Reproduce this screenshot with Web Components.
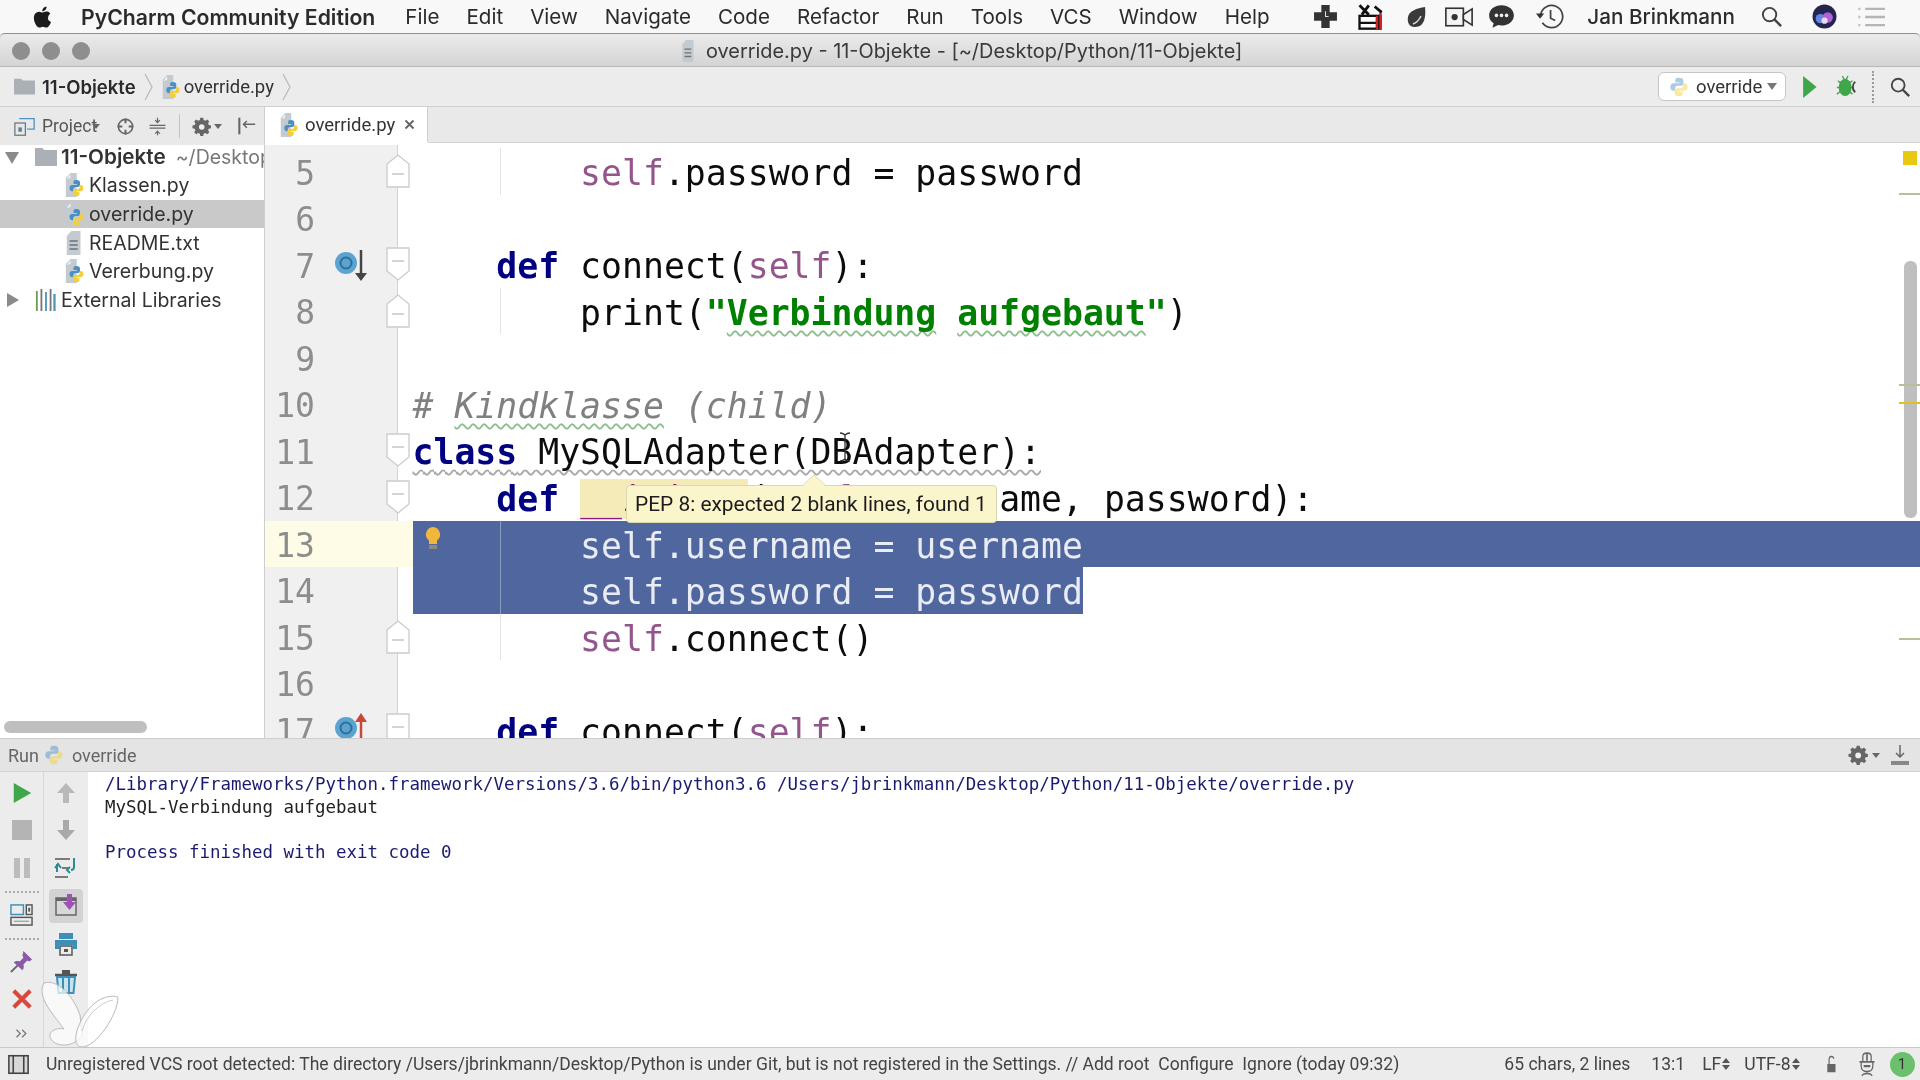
<!DOCTYPE html>
<html lang="en">
<head>
<meta charset="utf-8">
<title>PyCharm</title>
<style>
    html, body { margin: 0; width: 1920px; height: 1080px; overflow: hidden; background: #ececec; }
    body { font-family: Inter, "Liberation Sans", sans-serif; filter: blur(0.45px); }
    .k { color: #000080; font-weight: bold; }
    .s { color: #94558d; }
    .q { color: #008000; font-weight: bold; }
    .c { color: #808080; font-style: italic; }
    .m { color: #8a1a8a; background: #f5ebb9; }
    .wg { text-decoration: underline wavy #8fbf8f 1.5px; text-underline-offset: 5px; text-decoration-skip-ink: none; }
    .wk { text-decoration: underline wavy #a8a8a8 1.5px; text-underline-offset: 5px; text-decoration-skip-ink: none; }
    .sys { color: #1a1a70; }
    .out { color: #222; }
</style>
</head>
<body>
<ide-app>
    <mac-menubar slot="menu"></mac-menubar>
    <title-bar slot="title"></title-bar>
    <nav-bar slot="nav"></nav-bar>
    <tool-row slot="tools"></tool-row>
    <work-area slot="work">
        <project-tree slot="side">
            <tree-item kind="root" arrow="down" label="11-Objekte" note="~/Desktop/Python/11-Objekte"></tree-item>
            <tree-item kind="py" label="Klassen.py"></tree-item>
            <tree-item kind="py" label="override.py" selected></tree-item>
            <tree-item kind="txt" label="README.txt"></tree-item>
            <tree-item kind="py" label="Vererbung.py"></tree-item>
            <tree-item kind="lib" arrow="right" label="External Libraries"></tree-item>
        </project-tree>
        <code-editor slot="main">
<code-line n="5" fold="up" guide>        <span class="s">self</span>.password = password</code-line>
<code-line n="6"></code-line>
<code-line n="7" fold="down" mark="down">    <span class="k">def</span> connect(<span class="s">self</span>):</code-line>
<code-line n="8" fold="up" guide>        print(<span class="q">"<span class="wg">Verbindung</span> <span class="wg">aufgebaut</span>"</span>)</code-line>
<code-line n="9"></code-line>
<code-line n="10"><span class="c"># <span class="wg">Kindklasse</span> (child)</span></code-line>
<code-line n="11" fold="down"><span class="wk"><span class="k">class</span> MySQLAdapter(DBAdapter):</span></code-line>
<code-line n="12" fold="down">    <span class="k">def</span> <span class="m">__init__</span>(<span class="s">self</span>, username, password):</code-line>
<code-line n="13" sel="full" guide bulb>        self.username = username</code-line>
<code-line n="14" sel="part" guide>        self.password = password</code-line>
<code-line n="15" fold="up" guide>        <span class="s">self</span>.connect()</code-line>
<code-line n="16"></code-line>
<code-line n="17" fold="box" mark="up">    <span class="k">def</span> connect(<span class="s">self</span>):</code-line>
            <pep-tooltip slot="over">PEP 8: expected 2 blank lines, found 1</pep-tooltip>
            <error-stripe slot="over"></error-stripe>
        </code-editor>
    </work-area>
    <run-header slot="runhead"></run-header>
    <run-body slot="runbody">
        <div class="sys">/Library/Frameworks/Python.framework/Versions/3.6/bin/python3.6 /Users/jbrinkmann/Desktop/Python/11-Objekte/override.py</div>
        <div class="out">MySQL-Verbindung aufgebaut</div>
        <div>&nbsp;</div>
        <div class="sys">Process finished with exit code 0</div>
    </run-body>
    <status-bar slot="status"></status-bar>
</ide-app>

<script>
const PY = `<path fill="#4b8fc4" d="M12 2C8 2 8 3.800 8 5v2h4.500v1H6C4 8 2.500 9.500 2.500 12S4 16 6 16h1.600v-2.400c0-1.700 1.400-3 3.100-3h3.600c1.300 0 2.500-1.100 2.500-2.500V5c0-1.500-1.300-3-4.800-3z"/><path fill="#f5cf3a" d="M12 22c4 0 4-1.800 4-3v-2h-4.500v-1H18c2 0 3.500-1.500 3.500-4S20 8 18 8h-1.600v2.400c0 1.700-1.400 3-3.100 3H9.700c-1.300 0-2.500 1.100-2.500 2.500V19c0 1.500 1.300 3 4.800 3z"/>`;
const PAGE = `<path fill="#c4cbd0" d="M2 5l5-5h7v24H2z"/><path fill="#eef1f3" d="M3 6l4-1V1z"/>`;

const ICONS = {
    apple: `<path fill="#1c1c1c" d="M17.600 12.700c0-2.500 2-3.700 2.100-3.800-1.100-1.700-2.900-1.900-3.500-1.900-1.500-.2-2.900.9-3.700.9-.8 0-1.900-.9-3.200-.8-1.600 0-3.100 1-4 2.400-1.700 3-.4 7.400 1.200 9.800.8 1.200 1.800 2.500 3.100 2.400 1.200 0 1.700-.8 3.200-.8s1.900.8 3.200.8 2.200-1.200 3-2.400c.9-1.400 1.300-2.700 1.300-2.800-.1 0-2.900-1-2.900-3.800zM15.200 5.300c.7-.8 1.100-2 1-3.100-1 0-2.200.7-2.900 1.500-.6.700-1.200 1.900-1 3 1.100.1 2.200-.6 2.900-1.400z"/>`,
    plus: `<path fill="#333" d="M8 1h8v7h7v8h-7v7H8v-7H1V8h7z"/><path stroke="#ddd" fill="none" d="M12 7v5h3"/>`,
    tools: `<path fill="#111" d="M2 10h20v13H2z"/><path fill="#fff" d="M4 12h13v4H4zM4 18h13v3H4z"/><path fill="#d02020" d="M17 11h2v12h-2zM20 8h2v15h-2z"/><path stroke="#111" stroke-width="2.400" fill="none" d="M3 2l8 8M11 2l-6 8M16 3l6 5"/>`,
    leaf: `<path fill="#3a3a3a" d="M21 2c1 9 0 20-10 20C5 22 3 17 4 12 5 6 13 3 21 2z"/><path stroke="#ddd" stroke-width="1.500" fill="none" d="M9 19c3-1 6-4 8-8"/>`,
    cam: `<rect x="1.500" y="5" width="14" height="14" fill="#f4f4f4" stroke="#333" stroke-width="1.300"/><circle cx="8.500" cy="12" r="2.500" fill="#333"/><path fill="#f4f4f4" stroke="#333" stroke-width="1.300" d="M15.500 10l7-4.500v13l-7-4.500z"/>`,
    chat: `<path fill="#333" d="M12 2c6 0 11 3.800 11 9s-5 9-11 9c-1 0-2-.1-3-.4L4 22l1-4c-2.500-1.600-4-4-4-7 0-5.200 5-9 11-9z"/><circle cx="7.500" cy="11" r="1.600" fill="#eee"/><circle cx="12" cy="11" r="1.600" fill="#eee"/><circle cx="16.500" cy="11" r="1.600" fill="#eee"/>`,
    clock: `<path fill="none" stroke="#444" stroke-width="1.500" d="M4 10a9.500 9.500 0 1 1 1.500 7M12.500 6v7l4 2"/><path fill="#333" d="M0 9h7l-3.500 4.500z"/>`,
    search: `<circle cx="10" cy="10" r="7" fill="none" stroke="#444" stroke-width="2"/><path stroke="#444" stroke-width="2.600" d="M15 15l7 7"/>`,
    siri: `<circle cx="12" cy="12" r="11.500" fill="#23254f"/><circle cx="8" cy="14" r="4.500" fill="#5f86e8"/><circle cx="15" cy="13" r="5" fill="#b060d8"/><circle cx="12" cy="16" r="3" fill="#e8d8f0"/>`,
    list: `<path stroke="#b5b5b5" stroke-width="2" d="M7 5h17M7 12h17M7 19h17"/><path stroke="#c5c5c5" stroke-width="2" d="M1 5h2M1 12h2M1 19h2"/>`,
    folder: `<path fill="#aab0b6" d="M0 3h8l2 2h14v16H0z"/>`,
    py: `${PAGE}<g transform="translate(4 5.500) scale(.8)">${PY}</g>`,
    python: PY,
    pyfade: `<g opacity=".45">${PY}</g>`,
    txt: `<path fill="#c4cbd0" d="M3 5l5-5h10v24H3z"/><path stroke="#6b7278" stroke-width="1.500" d="M6 10h9M6 14h9M6 18h9"/>`,
    lib: `<path fill="#6d9c4c" d="M1 3h2v20H1z"/><path fill="#777" d="M6 1h2v22H6z"/><path fill="#4d95b8" d="M11 4h2v19h-2z"/><path fill="#777" d="M16 1h2v22h-2z"/><path fill="#4d95b8" d="M20 6h2.500v17H20z"/>`,
    project: `<rect x="1" y="8" width="12" height="14" fill="#e8e8e8" stroke="#6b7d8c" stroke-width="1.500"/><path fill="none" stroke="#4a93c2" stroke-width="1.500" d="M6 3h17v12h-8"/><path fill="#6b7d8c" d="M5 13h4v5H5z"/>`,
    target: `<circle cx="12" cy="12" r="9" fill="none" stroke="#666" stroke-width="2"/><path stroke="#666" stroke-width="2.500" d="M12 2v6M12 16v6M2 12h6M16 12h6"/>`,
    collapse: `<path stroke="#666" stroke-width="1.500" fill="none" d="M2 10.500h20M2 14h20M12 1v6M12 17v6M9 4l3 3 3-3M9 21l3-3 3 3"/>`,
    gear: `<path fill="#666" d="M10 1h4l.6 3 2.400 1 2.600-1.700 2.800 2.800L20.700 8.700l1 2.300 3 .6v3.800l-3 .6-1 2.300 1.700 2.600-2.800 2.800-2.600-1.700-2.400 1-.6 3h-4l-.6-3-2.400-1-2.600 1.700-2.800-2.800 1.700-2.600-1-2.300-3-.6v-3.800l3-.6 1-2.300L1.600 6.100l2.800-2.800L7 5l2.400-1z" transform="scale(.92)"/><circle cx="11" cy="12.500" r="3.500" fill="#eee"/>`,
    hide: `<path stroke="#666" stroke-width="2.500" d="M4 2v20"/><path stroke="#666" stroke-width="1.800" fill="none" d="M9 10h14M13 6l-4 4 4 4"/>`,
    play: `<path fill="#3fa64a" d="M3 1l19 11L3 23z"/>`,
    bug: `<ellipse cx="10" cy="13" rx="7" ry="9" fill="#3fa64a"/><path stroke="#3fa64a" stroke-width="1.500" d="M2 6l4 3M18 6l-4 3M1 13h4M1 20l4-3M15 13h4M18 20l-4-3M7 1l2 4M13 1l-2 4"/><path fill="none" stroke="#3f4a40" stroke-width="2" d="M21 7c-3 2-4 8 0 11"/>`,
    stop: `<rect x="2" y="2" width="20" height="20" fill="#b4b4b4"/>`,
    pause: `<path fill="#bcbcbc" d="M4 2h6v20H4zM14 2h6v20h-6z"/>`,
    up: `<path fill="#b9b9b9" d="M12 2l9 10h-6v10H9V12H3z"/>`,
    down: `<path fill="#a9a9a9" d="M12 22l9-10h-6V2H9v10H3z"/>`,
    wrap: `<path stroke="#555" stroke-width="1.500" d="M1 3h15M1 21h13M8 12h6"/><path stroke="#2d8c92" stroke-width="2" fill="none" d="M3 8v8M1 12l3-4 3 4M20 2v9c0 2-1 3-3 3M16 11l-3 3 3 3"/>`,
    scroll: `<rect x="2" y="4" width="20" height="17" fill="#d8d8d8" stroke="#666" stroke-width="1.500"/><path fill="#666" d="M2 4h20v3H2z"/><path fill="#a050b8" d="M13 0h5v8h4l-6.500 8L9 8h4z"/>`,
    print: `<path fill="#3d8fb8" d="M5 1h14v6H5zM1 8h22v9h-4v-4H5v4H1z"/><path fill="none" stroke="#555" stroke-width="1.500" d="M6 14h12v9H6z"/><path fill="#555" d="M10 17h4v3h-4z"/>`,
    trash: `<path stroke="#555" stroke-width="2.500" d="M1 5h22"/><path fill="#555" d="M8 0h8v4H8z"/><path fill="#c8e4ee" stroke="#3d8fb8" stroke-width="2" d="M3 7h18l-1.500 16H4.500z"/><path stroke="#3d8fb8" stroke-width="2" d="M9 8v14M15 8v14"/>`,
    layout: `<rect x="1" y="2" width="13" height="10" fill="none" stroke="#3d8fb8" stroke-width="1.500"/><rect x="17" y="2" width="6" height="10" fill="none" stroke="#555" stroke-width="1.500"/><path fill="#555" d="M19 5h2v4h-2z"/><rect x="1" y="15" width="22" height="8" fill="none" stroke="#555" stroke-width="1.500"/><path stroke="#888" d="M4 19h16"/>`,
    pin: `<path fill="#8a5aa8" d="M14 1l9 9-3 2-2-1-4 4c1 3 0 5-1 6L4 13c1-1 3-2 6-1l4-4-1-2z"/><path stroke="#666" stroke-width="2" d="M8 16l-7 7"/>`,
    close: `<path stroke="#d9483c" stroke-width="4.500" d="M3 3l18 18M21 3L3 21"/>`,
    more: `<path fill="none" stroke="#777" stroke-width="2" d="M4 6l6 6-6 6M13 6l6 6-6 6"/>`,
    frame: `<rect x="1" y="2" width="22" height="20" fill="#d8d8d8" stroke="#444" stroke-width="1.800"/><path stroke="#444" stroke-width="1.800" d="M6 2v20M18 2v20"/>`,
    lock: `<rect x="4" y="12" width="14" height="11" fill="#666"/><path fill="none" stroke="#666" stroke-width="2" d="M7 12V6c0-5 8-5 8-1"/>`,
    hector: `<path fill="none" stroke="#666" stroke-width="1.500" d="M7 10V5c0-4 10-4 10 0v5M3 10h18M5 10v4c0 3 3 5 7 5s7-2 7-5v-4M6 23c1-3 11-3 12 0"/><path stroke="#666" stroke-width="2" d="M12 3v6M8 14h8"/>`
};

class IdeIcon extends HTMLElement {
    connectedCallback() {
        const size = this.getAttribute('size') || 24;
        const h = this.getAttribute('h') || size;
        this.attachShadow({ mode: 'open' });
        this.shadowRoot.innerHTML = `
            <style>
                :host { display: inline-flex; flex: none; width: ${size}px; height: ${h}px; }
                svg { width: 100%; height: 100%; display: block; overflow: visible; }
            </style>
            <svg viewBox="0 0 24 24" preserveAspectRatio="none">${ICONS[this.getAttribute('name')] || ''}</svg>
        `;
    }
}
customElements.define('ide-icon', IdeIcon);

class IdeApp extends HTMLElement {
    connectedCallback() {
        this.attachShadow({ mode: 'open' });
        this.shadowRoot.innerHTML = `
            <style>
                :host { display: grid; width: 1920px; height: 1080px; grid-template-rows: 33px 34px 40px 38px 593px 34px 275px 33px; color: #2a2a2a; }
            </style>
            <slot name="menu"></slot><slot name="title"></slot><slot name="nav"></slot><slot name="tools"></slot>
            <slot name="work"></slot><slot name="runhead"></slot><slot name="runbody"></slot><slot name="status"></slot>
        `;
    }
}
customElements.define('ide-app', IdeApp);

class MacMenubar extends HTMLElement {
    connectedCallback() {
        this.attachShadow({ mode: 'open' });
        const items = [['File', 30], ['Edit', 27], ['View', 27], ['Navigate', 27], ['Code', 27], ['Refactor', 27], ['Run', 27], ['Tools', 27], ['VCS', 27], ['Window', 27], ['Help', 27]];
        this.shadowRoot.innerHTML = `
            <style>
                :host { display: flex; align-items: center; height: 33px; background: #f8f8f8; font-size: 20.600px; color: #2b2b2b; }
                .apple { margin-left: 29px; margin-right: 26px; }
                b { font-weight: 600; font-size: 21.200px; }
                .right { margin-left: auto; display: flex; align-items: center; }
                .user { font-weight: 500; font-size: 20.700px; margin: 0 24.500px 0 23px; }
            </style>
            <ide-icon class="apple" name="apple" size="26"></ide-icon>
            <b>PyCharm Community Edition</b>
            ${items.map(i => `<span style="margin-left:${i[1]}px">${i[0]}</span>`).join('')}
            <div class="right">
                <ide-icon name="plus" size="25" style="margin-right:18.500px"></ide-icon>
                <ide-icon name="tools" size="28" style="margin-right:20px"></ide-icon>
                <ide-icon name="leaf" size="24" style="margin-right:16px"></ide-icon>
                <ide-icon name="cam" size="30" style="margin-right:13.500px"></ide-icon>
                <ide-icon name="chat" size="27" style="margin-right:21.500px"></ide-icon>
                <ide-icon name="clock" size="28"></ide-icon>
                <span class="user">Jan Brinkmann</span>
                <ide-icon name="search" size="23" style="margin-right:29px"></ide-icon>
                <ide-icon name="siri" size="25" style="margin-right:20.500px"></ide-icon>
                <ide-icon name="list" size="28" style="margin-right:35px"></ide-icon>
            </div>
        `;
    }
}
customElements.define('mac-menubar', MacMenubar);

class TitleBar extends HTMLElement {
    connectedCallback() {
        this.attachShadow({ mode: 'open' });
        this.shadowRoot.innerHTML = `
            <style>
                :host { display: flex; align-items: center; position: relative; height: 34px; box-sizing: border-box; padding-top: 2px; background: linear-gradient(#ebebeb, #d4d4d4); border-top: 1px solid #8f8f8f; border-bottom: 1px solid #b9b9b9; border-radius: 5px 5px 0 0; }
                .lights { display: flex; gap: 12px; margin-left: 12px; }
                .lights i { width: 18px; height: 18px; border-radius: 50%; background: #8e8e8e; }
                .text { position: absolute; left: 680px; display: flex; align-items: center; gap: 8px; font-size: 19.900px; color: #3a3a3a; white-space: nowrap; }
            </style>
            <div class="lights"><i></i><i></i><i></i></div>
            <div class="text"><ide-icon name="txt" size="18" h="22"></ide-icon><span>override.py - 11-Objekte - [~/Desktop/Python/11-Objekte]</span></div>
        `;
    }
}
customElements.define('title-bar', TitleBar);

class NavBar extends HTMLElement {
    connectedCallback() {
        this.attachShadow({ mode: 'open' });
        this.shadowRoot.innerHTML = `
            <style>
                :host { display: flex; align-items: center; height: 40px; box-sizing: border-box; background: #ececec; border-bottom: 1px solid #cfcfcf; font-size: 18.500px; }
                b { font-weight: 600; margin-left: 7px; }
                .chev { width: 9px; height: 30px; margin: 0 8px; }
                .file { margin-left: 2px; color: #333; font-family: Roboto, sans-serif; font-size: 18.500px; }
                .run { margin-left: auto; display: flex; align-items: center; }
                .combo { display: flex; align-items: center; width: 128px; height: 29px; margin-left: 2px; box-sizing: border-box; background: #fff; border: 1px solid #c6c6c6; border-radius: 6px; padding-left: 9px; font-family: Roboto, sans-serif; font-size: 18.500px; color: #333; }
                .combo span { margin-left: 6px; }
                .combo i { margin-left: 5px; border: 5.500px solid transparent; border-top: 7px solid #777; border-bottom: 0; }
                .dots { width: 0; height: 32px; border-left: 2px dotted #999; margin: 0 15px 0 14px; }
            </style>
            <ide-icon name="folder" size="21" style="margin-left:14px"></ide-icon>
            <b>11-Objekte</b>
            <svg class="chev" viewBox="0 0 9 30"><path d="M1 2l7 13-7 13" fill="none" stroke="#bbb" stroke-width="1.300"/></svg>
            <ide-icon name="py" size="21" h="24"></ide-icon>
            <span class="file">override.py</span>
            <svg class="chev" viewBox="0 0 9 30"><path d="M1 2l7 13-7 13" fill="none" stroke="#bbb" stroke-width="1.300"/></svg>
            <div class="run">
                <div class="combo"><ide-icon name="pyfade" size="22"></ide-icon><span>override</span><i></i></div>
                <ide-icon name="play" size="17" h="24" style="margin-left:15px"></ide-icon>
                <ide-icon name="bug" size="22" h="23" style="margin-left:18px"></ide-icon>
                <div class="dots"></div>
                <ide-icon name="search" size="22" style="margin-right:9px"></ide-icon>
            </div>
        `;
    }
}
customElements.define('nav-bar', NavBar);

class ToolRow extends HTMLElement {
    connectedCallback() {
        this.attachShadow({ mode: 'open' });
        this.shadowRoot.innerHTML = `
            <style>
                :host { display: flex; height: 38px; background: #e9e9e9; font-family: Roboto, sans-serif; font-size: 18.500px; color: #555; }
                .side { width: 265px; flex: none; display: flex; align-items: center; box-sizing: border-box; border-right: 1px solid #cfcfcf; font-size: 17.500px; }
                .side span { margin-left: 7px; }
                .sep { width: 1px; height: 24px; background: #c4c4c4; margin: 0 13px 0 12px; }
                .arrow { border: 4px solid transparent; border-top: 5px solid #666; border-bottom: 0; margin-left: 2px; }
                .arrow.over { margin-left: -5px; }
                .tab { display: flex; align-items: center; width: 163px; height: 35px; box-sizing: border-box; padding-left: 14px; background: #fff; border-right: 1px solid #cfcfcf; color: #333; }
                .tab span { margin-left: 5px; }
                .tab svg { width: 11px; height: 11px; margin-left: 9px; }
                .rest { flex: 1; height: 35px; border-bottom: 1px solid #d4d4d4; }
                .wrap { flex: 1; display: flex; align-items: flex-start; background: #e9e9e9; box-shadow: inset 0 -3px 0 #fff; }
            </style>
            <div class="side">
                <ide-icon name="project" size="21" style="margin-left:14px"></ide-icon>
                <span>Project</span><i class="arrow over"></i>
                <ide-icon name="target" size="19" style="margin-left:16px"></ide-icon>
                <ide-icon name="collapse" size="19" style="margin-left:13px"></ide-icon>
                <div class="sep"></div>
                <ide-icon name="gear" size="19"></ide-icon><i class="arrow"></i>
                <ide-icon name="hide" size="20" style="margin-left:14px"></ide-icon>
            </div>
            <div class="wrap">
                <div class="tab">
                    <ide-icon name="py" size="21" h="24"></ide-icon><span>override.py</span>
                    <svg viewBox="0 0 11 11"><path d="M1.500 1.500l8 8M9.500 1.500l-8 8" stroke="#666" stroke-width="2"/></svg>
                </div>
                <div class="rest"></div>
            </div>
        `;
    }
}
customElements.define('tool-row', ToolRow);

class WorkArea extends HTMLElement {
    connectedCallback() {
        this.attachShadow({ mode: 'open' });
        this.shadowRoot.innerHTML = `
            <style>
                :host { display: grid; grid-template-columns: 265px 1fr; height: 593px; overflow: hidden; }
            </style>
            <slot name="side"></slot><slot name="main"></slot>
        `;
    }
}
customElements.define('work-area', WorkArea);

class ProjectTree extends HTMLElement {
    connectedCallback() {
        this.attachShadow({ mode: 'open' });
        this.shadowRoot.innerHTML = `
            <style>
                :host { display: block; position: relative; height: 593px; box-sizing: border-box; background: #fff; border-right: 1px solid #cdcdcd; overflow: hidden; }
                .list { margin-top: -2.500px; }
                .bar { position: absolute; left: 4px; bottom: 5px; width: 143px; height: 12px; border-radius: 6px; background: #bfbfbf; }
            </style>
            <div class="list"><slot></slot></div>
            <div class="bar"></div>
        `;
    }
}
customElements.define('project-tree', ProjectTree);

class TreeItem extends HTMLElement {
    connectedCallback() {
        const kind = this.getAttribute('kind');
        const arrow = this.getAttribute('arrow');
        const note = this.getAttribute('note');
        const top = kind === 'root' || kind === 'lib';
        const icon = { root: 'folder', lib: 'lib', py: 'py', txt: 'txt' }[kind];
        const tri = arrow === 'down' ? 'M0 2h14L7 14z' : 'M2 0l12 7-12 7z';
        this.attachShadow({ mode: 'open' });
        this.shadowRoot.innerHTML = `
            <style>
                :host { display: flex; align-items: center; height: 28.600px; font-size: ${kind === 'root' ? 20.7 : 19.5}px; color: #333; white-space: nowrap; overflow: hidden; }
                :host([selected]) { background: #c9c9c9; }
                .tri { width: 14px; height: 14px; margin-left: 5px; flex: none; }
                .name { margin-left: ${top ? 4 : 3}px; font-weight: ${kind === 'root' ? 600 : 400}; flex: none; }
                .note { margin-left: 10px; color: #777; font-size: 19.500px; flex: none; }
            </style>
            ${arrow ? `<svg class="tri" viewBox="0 0 14 14"><path d="${tri}" fill="#8a8a8a"/></svg>` : ''}
            <ide-icon name="${icon}" size="22" h="24" style="margin-left:${top ? 16 : 64}px"></ide-icon>
            <span class="name">${this.getAttribute('label')}</span>
            ${note ? `<span class="note">${note}</span>` : ''}
        `;
    }
}
customElements.define('tree-item', TreeItem);

class CodeEditor extends HTMLElement {
    connectedCallback() {
        this.attachShadow({ mode: 'open' });
        this.shadowRoot.innerHTML = `
            <style>
                :host { display: block; position: relative; height: 593px; box-sizing: border-box; padding-top: 3.400px; overflow: hidden; background: linear-gradient(90deg, #f0f0f0 132px, #d4d4d4 132px, #d4d4d4 133px, #fff 133px); }
                .cursor { position: absolute; left: 574px; top: 287px; width: 12px; height: 30px; }
            </style>
            <slot></slot>
            <slot name="over"></slot>
            <svg class="cursor" viewBox="0 0 12 30"><path d="M1 1c3 0 4 1 5 2 1-1 2-2 5-2M6 3v24M1 29c3 0 4-1 5-2 1 1 2 2 5 2" fill="none" stroke="#333" stroke-width="1.300"/></svg>
        `;
    }
}
customElements.define('code-editor', CodeEditor);

const FOLDS = {
    up: 'M1 33V10L12 1l11 9v23z',
    down: 'M1 1h22v23l-11 9-11-9z',
    box: 'M1 1h22v32H1z'
};

class CodeLine extends HTMLElement {
    connectedCallback() {
        const fold = this.getAttribute('fold');
        const mark = this.getAttribute('mark');
        const n = this.getAttribute('n');
        const minusY = fold === 'up' ? 20 : 14;
        this.attachShadow({ mode: 'open' });
        this.shadowRoot.innerHTML = `
            <style>
                :host { display: flex; position: relative; height: 46.530px; font-family: "DejaVu Sans Mono", monospace; font-size: 34.800px; color: #0c0c0c; }
                :host([n="13"]) .gut { background: #fefce6; }
                :host([n="13"]) .pad { background: #fefce6; }
                :host([sel]) { color: #e9ecf5; }
                .gut { width: 133px; flex: none; display: flex; align-items: center; }
                .num { width: 50px; text-align: right; font-size: 33px; color: #8d8d8d; position: relative; top: 1.500px; }
                .pad { width: 14.500px; flex: none; }
                .code { white-space: pre; width: fit-content; height: 46.530px; line-height: 50px; }
                :host([sel="full"]) .code { flex: 1; background: #4f669f; }
                :host([sel="part"]) .code { background: #4f669f; }
                .fold { position: absolute; left: 121px; top: 6px; width: 24px; height: 34px; }
                .guide { position: absolute; left: 235px; top: 0; bottom: 0; width: 1px; background: #e4e4e4; }
                :host([sel]) .guide { background: #8b9bc2; }
                .bulb { position: absolute; left: 159px; top: 5px; width: 18px; height: 24px; }
                .mark { position: relative; margin-left: 20px; width: 36px; height: 36px; }
            </style>
            <div class="gut">
                <span class="num">${n}</span>
                ${mark ? `<svg class="mark" viewBox="0 0 36 36">
                    <circle cx="11" cy="16" r="11" fill="#5ba3d0"/><circle cx="11" cy="16" r="5.500" fill="none" stroke="#2f6f95" stroke-width="2"/>
                    ${mark === 'down' ? '<path d="M26 3v26" stroke="#444" stroke-width="2.500"/><path d="M20 26h12l-6 8z" fill="#444"/>' : '<path d="M26 36V8" stroke="#c8483c" stroke-width="2.500"/><path d="M20 10h12L26 1z" fill="#c8483c"/>'}
                </svg>` : ''}
            </div>
            <div class="pad"></div>
            <div class="code"><slot></slot></div>
            ${this.hasAttribute('guide') ? '<div class="guide"></div>' : ''}
            ${fold ? `<svg class="fold" viewBox="0 0 24 34"><path d="${FOLDS[fold]}" fill="#fff" stroke="#cbcbcb" stroke-width="1.300"/><path d="M6 ${minusY}h12" stroke="#bdbdbd" stroke-width="1.300"/></svg>` : ''}
            ${this.hasAttribute('bulb') ? `<svg class="bulb" viewBox="0 0 18 24"><path d="M9 1a7.500 7.500 0 0 0-4 13.500V18h8v-3.500A7.500 7.500 0 0 0 9 1z" fill="#f0b73c"/><path d="M5 19h8v4H5z" fill="#8f8a78"/></svg>` : ''}
        `;
    }
}
customElements.define('code-line', CodeLine);

class PepTooltip extends HTMLElement {
    connectedCallback() {
        this.attachShadow({ mode: 'open' });
        this.shadowRoot.innerHTML = `
            <style>
                :host { position: absolute; left: 361px; top: 340px; display: flex; align-items: center; width: 371px; height: 38px; box-sizing: border-box; padding-left: 8px; background: #fbf5cb; border: 1px solid #dcd7ad; border-radius: 4px; font-family: Roboto, sans-serif; font-size: 20.900px; color: #1c1c1c; white-space: nowrap; }
                svg { position: absolute; left: 175px; top: -12px; width: 24px; height: 13px; }
            </style>
            <svg viewBox="0 0 24 13"><path d="M0 13L12 1l12 12z" fill="#fbf5cb"/><path d="M0 12L12 1l12 11" fill="none" stroke="#dcd7ad"/></svg>
            <slot></slot>
        `;
    }
}
customElements.define('pep-tooltip', PepTooltip);

class ErrorStripe extends HTMLElement {
    connectedCallback() {
        this.attachShadow({ mode: 'open' });
        const marks = [[48, '#bdbd9c'], [239, '#bdbd9c'], [257, '#e3c01a'], [493, '#bdbd9c']];
        this.shadowRoot.innerHTML = `
            <style>
                :host { position: absolute; right: 0; top: 0; bottom: 0; width: 21px; }
                .sq { position: absolute; left: 4px; top: 6px; width: 14px; height: 14px; background: #e8c810; }
                .thumb { position: absolute; left: 5px; top: 116px; width: 13px; height: 257px; border-radius: 6px; background: #bfbfbf; }
                .m { position: absolute; left: 0; width: 21px; height: 2px; }
            </style>
            <div class="thumb"></div>
            <div class="sq"></div>
            ${marks.map(m => `<div class="m" style="top:${m[0]}px;background:${m[1]}"></div>`).join('')}
        `;
    }
}
customElements.define('error-stripe', ErrorStripe);

class RunHeader extends HTMLElement {
    connectedCallback() {
        this.attachShadow({ mode: 'open' });
        this.shadowRoot.innerHTML = `
            <style>
                :host { display: flex; align-items: center; height: 34px; box-sizing: border-box; background: #e4e4e4; border-top: 1px solid #cfcfcf; border-bottom: 1px solid #d2d2d2; font-family: Roboto, sans-serif; font-size: 18px; color: #666; }
                .arrow { border: 4px solid transparent; border-top: 5px solid #666; border-bottom: 0; margin-left: 3px; }
            </style>
            <span style="margin-left:8px">Run</span>
            <ide-icon name="pyfade" size="22" style="margin:0 7px 0 4px"></ide-icon>
            <span>override</span>
            <ide-icon name="gear" size="20" style="margin-left:auto"></ide-icon><i class="arrow"></i>
            <svg width="20" height="22" viewBox="0 0 20 22" style="margin:0 10px 0 10px"><path d="M10 1v12M6 9l4 4 4-4" fill="none" stroke="#666" stroke-width="1.500"/><path d="M1 17h18v4H1z" fill="#888"/></svg>
        `;
    }
}
customElements.define('run-header', RunHeader);

class RunBody extends HTMLElement {
    connectedCallback() {
        this.attachShadow({ mode: 'open' });
        const col1 = [['play', 22, 38], ['stop', 24, 36], ['pause', 24, 40], [null, 0, 8], ['layout', 23, 36], [null, 0, 14], ['pin', 23, 30], ['close', 22, 46], ['more', 15, 22]];
        const col2 = [['up', 24, 38], ['down', 24, 36], ['wrap', 24, 39], ['scroll', 24, 38], ['print', 24, 38], ['trash', 24, 37]];
        const cell = i => `<div class="cell" style="height:${i[2]}px">${i[0] ? `<div class="${i[0] === 'scroll' ? 'on' : ''}"><ide-icon name="${i[0]}" size="${i[1]}" style="display:block"></ide-icon></div>` : '<div class="dots"></div>'}</div>`;
        this.shadowRoot.innerHTML = `
            <style>
                :host { display: flex; position: relative; height: 275px; background: #fff; font-family: "DejaVu Sans Mono", monospace; font-size: 17.460px; line-height: 22.600px; overflow: hidden; }
                .c1, .c2 { width: 44px; box-sizing: border-box; flex: none; background: #ececec; padding-top: 2px; display: flex; flex-direction: column; align-items: center; }
                .c1 { border-right: 1px solid #d8d8d8; }
                .cell { display: flex; align-items: center; justify-content: center; }
                .dots { width: 34px; border-top: 2px dotted #aaa; }
                .on { background: #d3d3d3; border-radius: 4px; padding: 5px; }
                .text { padding: 1px 0 0 17px; white-space: nowrap; }
                .fly { position: absolute; left: 40px; bottom: -4px; width: 82px; height: 70px; }
            </style>
            <div class="c1">${col1.map(cell).join('')}</div>
            <div class="c2">${col2.map(cell).join('')}</div>
            <div class="text"><slot></slot></div>
            <svg class="fly" viewBox="0 0 82 70"><path d="M4 2c12-4 28 10 36 32l2 20c-6 12-28 14-32 2-2-6 8-10 14-8C14 34-4 16 4 2z" fill="#fff" fill-opacity=".7" stroke="#bbb"/><path d="M78 16c-14-4-30 8-38 26-6 12-6 24 2 24 14 0 36-32 36-50z" fill="#fff" fill-opacity=".7" stroke="#bbb"/><path d="M73 19C58 22 46 36 42 50" fill="none" stroke="#ccc"/></svg>
        `;
    }
}
customElements.define('run-body', RunBody);

class StatusBar extends HTMLElement {
    connectedCallback() {
        this.attachShadow({ mode: 'open' });
        this.shadowRoot.innerHTML = `
            <style>
                :host { display: flex; align-items: center; position: relative; height: 33px; box-sizing: border-box; background: #ececec; border-top: 1px solid #c8c8c8; font-family: Roboto, sans-serif; font-size: 17.550px; color: #444; white-space: nowrap; }
                .msg { margin-left: 17px; }
                .right { position: absolute; right: 0; top: 0; bottom: 0; display: flex; align-items: center; }
                .sw { display: inline-block; width: 8px; height: 14px; margin-left: 1px; vertical-align: -1px; }
                .one { position: relative; width: 25px; height: 25px; margin: 0 5.500px 0 13px; display: flex; align-items: center; justify-content: center; background: #6ac06c; border-radius: 50%; font-size: 15px; color: #333; }
            </style>
            <ide-icon name="frame" size="21" style="margin-left:8px"></ide-icon>
            <span class="msg">Unregistered VCS root detected: The directory /Users/jbrinkmann/Desktop/Python is under Git, but is not registered in the Settings. // Add root&nbsp; Configure&nbsp; Ignore (today 09:32)</span>
            <div class="right">
                <span>65 chars, 2 lines</span>
                <span style="margin-left:21px">13:1</span>
                <span style="margin-left:17px">LF<svg class="sw" viewBox="0 0 8 14"><path d="M0 6l4-5 4 5zM0 8l4 5 4-5z" fill="#555"/></svg></span>
                <span style="margin-left:14px">UTF-8<svg class="sw" viewBox="0 0 8 14"><path d="M0 6l4-5 4 5zM0 8l4 5 4-5z" fill="#555"/></svg></span>
                <ide-icon name="lock" size="14" h="18" style="margin-left:25px"></ide-icon>
                <ide-icon name="hector" size="20" h="26" style="margin-left:18px"></ide-icon>
                <span class="one">1</span>
            </div>
        `;
    }
}
customElements.define('status-bar', StatusBar);
</script>
</body>
</html>
